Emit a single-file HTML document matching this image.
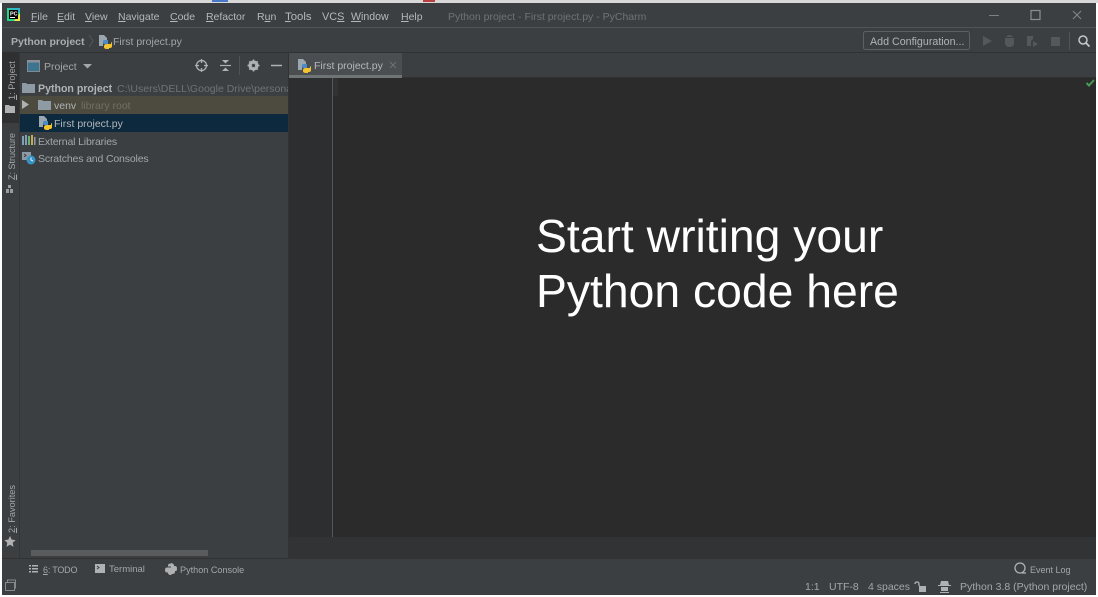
<!DOCTYPE html>
<html><head><meta charset="utf-8">
<style>
html,body{margin:0;padding:0;background:#fff}
body{width:1098px;height:597px;overflow:hidden;position:relative;font-family:"Liberation Sans",sans-serif}
.b{position:absolute}
.t{position:absolute;white-space:nowrap;font-size:10.2px;line-height:14px;color:#a3a7a9}
.m{top:10px;font-size:10.5px;color:#b4b8ba}
u{text-decoration-thickness:1px;text-underline-offset:1px}
.v{position:absolute;white-space:nowrap;font-size:9.2px;line-height:12px;color:#a3a7a9;transform-origin:0 0;transform:rotate(-90deg)}
svg{position:absolute;left:0;top:0}
</style></head><body>
<div class="b" style="left:0;top:0;width:1098px;height:3px;background:#d8d8d8"></div>
<div class="b" style="left:212px;top:0;width:16px;height:2px;background:#4a78c8"></div>
<div class="b" style="left:423px;top:0;width:12px;height:2px;background:#b84040"></div>
<div class="b" style="left:2px;top:3px;width:1094px;height:592px;background:#3c3f41"></div>
<div class="b" style="left:2px;top:27px;width:1094px;height:1px;background:#515456"></div>
<div class="b" style="left:2px;top:52px;width:1094px;height:1px;background:#2f3132"></div>
<div class="b" style="left:2px;top:53px;width:17px;height:70px;background:#2e3031"></div>
<div class="b" style="left:19px;top:53px;width:1px;height:505px;background:#333537"></div>
<div class="b" style="left:20px;top:96px;width:268px;height:18px;background:#4d4a40"></div>
<div class="b" style="left:20px;top:114px;width:268px;height:18px;background:#0d293e"></div>
<div class="b" style="left:288px;top:53px;width:1px;height:505px;background:#323232"></div>
<div class="b" style="left:289px;top:53px;width:113px;height:22px;background:#4a4e50"></div>
<div class="b" style="left:289px;top:75px;width:113px;height:3px;background:#6f7477"></div>
<div class="b" style="left:402px;top:77px;width:694px;height:1px;background:#323232"></div>
<div class="b" style="left:289px;top:78px;width:807px;height:459px;background:#2b2b2b"></div>
<div class="b" style="left:289px;top:78px;width:44px;height:459px;background:#2d2e2f"></div>
<div class="b" style="left:332px;top:78px;width:1px;height:459px;background:#555759"></div>
<div class="b" style="left:333px;top:78px;width:5px;height:18px;background:#323232"></div>
<div class="b" style="left:289px;top:537px;width:807px;height:21px;background:#313335"></div>
<div class="b" style="left:2px;top:558px;width:1094px;height:1px;background:#323232"></div>
<div class="b" style="left:31px;top:550px;width:177px;height:6px;background:#595b5d"></div>

<svg width="1098" height="597" viewBox="0 0 1098 597">
<defs>
<g id="py"><path d="M2 0h5l3 3v3H6v5H2z" fill="#9aa7b0"/><path d="M7 5h4v4H7q-1 0-1-2t1-2z" fill="#4a8cc2"/><path d="M14 7q1 0 1 2v2q0 2-2 2h-1v1h-2q-3 0-3-2v-1q0-2 3-2h4z" fill="#f4c430"/></g>
</defs>
<!-- logo -->
<rect x="7" y="8" width="13" height="13" fill="#21d789"/><path d="M7 8h13v5z" fill="#2fb8c8"/><path d="M20 13v8h-6z" fill="#f5e642"/>
<rect x="9" y="10" width="9" height="9" fill="#000"/><rect x="10" y="17" width="5" height="1" fill="#fff"/>
<text x="10" y="15.5" font-size="5.5" font-weight="bold" fill="#fff" font-family="Liberation Sans">PC</text>
<!-- window controls -->
<path d="M989 15.500h10" stroke="#7c8082"/><rect x="1031" y="10.500" width="9" height="9" fill="none" stroke="#8b8f91" stroke-width="1.200"/><path d="M1073 11l8 8M1081 11l-8 8" stroke="#85898b"/>
<!-- nav chevron -->
<path d="M89 35l4 6-4 6" fill="none" stroke="#55585a"/>
<use href="#py" x="97" y="35"/>
<!-- config button -->
<rect x="863.500" y="31.500" width="106" height="18" rx="2" fill="none" stroke="#5e6163"/>
<path d="M983 36l9 5-9 5z" fill="#55585a"/>
<path d="M1005 38h9v6q-1 3-4.500 3t-4.500-3z M1006 37q3.500-4 7 0z" fill="#55585a"/>
<path d="M1027 36h6v3l-2 2v5h-4z" fill="#55585a"/><path d="M1033 41l5 3-5 3z" fill="#55585a"/>
<rect x="1051" y="37" width="9" height="9" fill="#55585a"/>
<path d="M1069.500 32v18" stroke="#515456"/>
<circle cx="1083" cy="40" r="4" fill="none" stroke="#c4c8ca" stroke-width="1.500"/><path d="M1086 43l3.500 3.500" stroke="#c4c8ca" stroke-width="1.800"/>
<!-- project combo -->
<rect x="27.500" y="60.500" width="12" height="11" fill="#3d7490" stroke="#7f8b91"/><rect x="27" y="60" width="13" height="2.500" fill="#8a9297"/>
<path d="M83 64h9l-4.500 4.500z" fill="#a3a7a9"/>
<!-- header toolbar -->
<circle cx="201.500" cy="65.500" r="5" fill="none" stroke="#afb1b3" stroke-width="1.300"/><path d="M201.500 59v4M201.500 68v4M195 65.500h4M204 65.500h4" stroke="#afb1b3" stroke-width="1.300"/>
<path d="M220 65.500h11" stroke="#afb1b3" stroke-width="1.200"/><path d="M222 60h7l-3.500 3.500zM222 71h7l-3.500-3.500z" fill="#afb1b3"/>
<path d="M239.500 56v19" stroke="#505355"/>
<circle cx="253.500" cy="65.500" r="3.800" fill="none" stroke="#afb1b3" stroke-width="2.600"/><path d="M253.500 59.500v12M247.500 65.500h12M249.300 61.300l8.400 8.400M257.700 61.300l-8.400 8.400" stroke="#afb1b3" stroke-width="1.500"/><circle cx="253.500" cy="65.500" r="1.600" fill="#3c3f41"/>
<path d="M271 65.500h11" stroke="#afb1b3" stroke-width="1.500"/>
<!-- side icons -->
<path d="M5 105h4l1 1h5v7H5z" fill="#afb1b3"/>
<path d="M8 185h3v3H8zM6 189h3v4H6zM10 189h3v4h-3z" fill="#9a9ea0"/>
<path d="M10 536l1.700 3.600 3.900.5-2.900 2.700.8 3.900-3.500-2-3.500 2 .8-3.900-2.900-2.700 3.900-.5z" fill="#afb1b3"/>
<!-- tree -->
<path d="M22 83h4l1 1h8v9H22z" fill="#8e9ba5"/>
<path d="M22 100l7 4.500-7 4.500z" fill="#afb1b3"/>
<path d="M38 100h4l1 1h8v9H38z" fill="#8e9ba5"/>
<use href="#py" x="37" y="116"/>
<path d="M22 136h2v9h-2zM25 135h2v10h-2z" fill="#7ea0b4"/><path d="M28 136h2v9h-2z" fill="#6fae6f"/><path d="M31 135h2v10h-2z" fill="#c4a95c"/><path d="M34 137h1.500v8H34z" fill="#8e9ba5"/>
<rect x="22" y="152" width="9" height="8" fill="#8e9ba5"/><path d="M24 154l2 1.500-2 1.500" stroke="#3c3f41" fill="none"/>
<circle cx="31" cy="160" r="4.500" fill="#3592c4"/><path d="M31 157.500v2.500l2 1" stroke="#e8f2f8" fill="none"/>
<!-- tab -->
<use href="#py" x="296" y="59"/>
<path d="M390 62l6 6M396 62l-6 6" stroke="#6e7274"/>
<!-- check -->
<path d="M1086.500 83l2.500 2.500 5-5.500" fill="none" stroke="#499c54" stroke-width="2"/>
<!-- bottom bar -->
<path d="M29 565h2v1.500h-2zM29 568h2v1.500h-2zM29 571h2v1.500h-2zM32 565h6v1.500h-6zM32 568h6v1.500h-6zM32 571h6v1.500h-6z" fill="#afb1b3"/>
<rect x="95" y="564" width="10" height="9" fill="#afb1b3"/><path d="M97 566l2 1.500-2 1.500" stroke="#3c3f41" fill="none"/>
<path d="M171 563.500q-3 0-3 2v1h3v1h-4q-2 0-2 2.500t2 2.500h1v-2q0-1 2-1h3q1 0 1-1v-3q0-2-3-2.500zM172 574q3 0 3-2v-1h1q1 0 1-2.500t-2-2.500h-1v2q0 1-2 1h-3q-1 0-1 1v3q0 2 3 2z" fill="#afb1b3"/>
<rect x="5.500" y="582.500" width="9" height="8" fill="none" stroke="#85898b"/><path d="M7.500 582v-2h8v8h-1" fill="none" stroke="#85898b"/>
<circle cx="1020" cy="568" r="5" fill="none" stroke="#afb1b3" stroke-width="1.300"/><path d="M1022 573h4" stroke="#afb1b3" stroke-width="1.300"/>
<rect x="919" y="586" width="7" height="6" fill="#afb1b3"/><path d="M919 586v-2q0-2-2-2t-2 2" fill="none" stroke="#afb1b3" stroke-width="1.300"/>
<path d="M941 581h7l1 4h2v1h-13v-1h2z" fill="#afb1b3"/><rect x="941" y="587" width="7" height="4" fill="#afb1b3"/><path d="M940 592.500h9" stroke="#afb1b3"/>
</svg>

<span class="t m" style="left:31px"><u>F</u>ile</span>
<span class="t m" style="left:57px"><u>E</u>dit</span>
<span class="t m" style="left:85px"><u>V</u>iew</span>
<span class="t m" style="left:118px"><u>N</u>avigate</span>
<span class="t m" style="left:170px"><u>C</u>ode</span>
<span class="t m" style="left:206px;letter-spacing:-.05px"><u>R</u>efactor</span>
<span class="t m" style="left:257px">R<u>u</u>n</span>
<span class="t m" style="left:285px;font-size:11.4px"><u>T</u>ools</span>
<span class="t m" style="left:322px"><span style="font-size:10.900px">VC<u>S</u></span></span>
<span class="t m" style="left:351px;font-size:10.600px"><u>W</u>indow</span>
<span class="t m" style="left:401px"><u>H</u>elp</span>
<span class="t" style="left:448px;top:10px;font-size:10.5px;color:#6f7375">Python project - First project.py - PyCharm</span>
<span class="t" style="left:11px;top:35px;font-size:10.500px;font-weight:bold;color:#a9adaf">Python project</span>
<span class="t" style="left:113px;top:35px;font-size:10.500px">First project.py</span>
<span class="t" style="left:870px;top:35px;font-size:10.700px;color:#b0b4b6">Add Configuration...</span>
<span class="t" style="left:44px;top:60px;font-size:10.500px">Project</span>
<span class="t" style="left:38px;top:82px;font-size:10.600px;font-weight:bold;color:#b0b4b6">Python project</span>
<span class="t" style="left:117px;top:82px;font-size:10.500px;width:171px;overflow:hidden;color:#6f7375">C:\Users\DELL\Google Drive\personal</span>
<span class="t" style="left:54px;top:99px;font-size:10.500px;color:#b0b4b6">venv</span>
<span class="t" style="left:81px;top:99px;font-size:10.500px;color:#6f7068">library root</span>
<span class="t" style="left:54px;top:117px;font-size:10.500px;color:#b4b8ba">First project.py</span>
<span class="t" style="left:38px;top:135px;font-size:10.500px;letter-spacing:-.15px">External Libraries</span>
<span class="t" style="left:38px;top:152px;font-size:10.500px;letter-spacing:-.15px">Scratches and Consoles</span>
<span class="t" style="left:314px;top:59px;font-size:10.500px;color:#b4b8ba">First project.py</span>
<span class="v" style="left:6px;top:100px"><u>1</u>: Project</span>
<span class="v" style="left:6px;top:180px;font-size:9px"><u>Z</u>: Structure</span>
<span class="v" style="left:6px;top:533px;font-size:9.200px"><u>2</u>: Favorites</span>
<span class="t" style="left:43px;top:563px;font-size:9px;letter-spacing:-.2px"><u>6</u>: TODO</span>
<span class="t" style="left:109px;top:563px;font-size:9.500px">Terminal</span>
<span class="t" style="left:180px;top:563px;font-size:9.100px">Python Console</span>
<span class="t" style="left:1030px;top:563px;font-size:9px">Event Log</span>
<span class="t" style="left:805px;top:580px;font-size:10.500px">1:1</span>
<span class="t" style="left:829px;top:580px;font-size:10.500px">UTF-8</span>
<span class="t" style="left:868px;top:580px;font-size:10.500px">4 spaces</span>
<span class="t" style="left:960px;top:580px;font-size:10.500px">Python 3.8 (Python project)</span>
<div class="b" style="left:536px;top:209px;font-size:46.3px;line-height:55px;color:#fff;white-space:nowrap">Start writing your<br>Python code here</div>
</body></html>
